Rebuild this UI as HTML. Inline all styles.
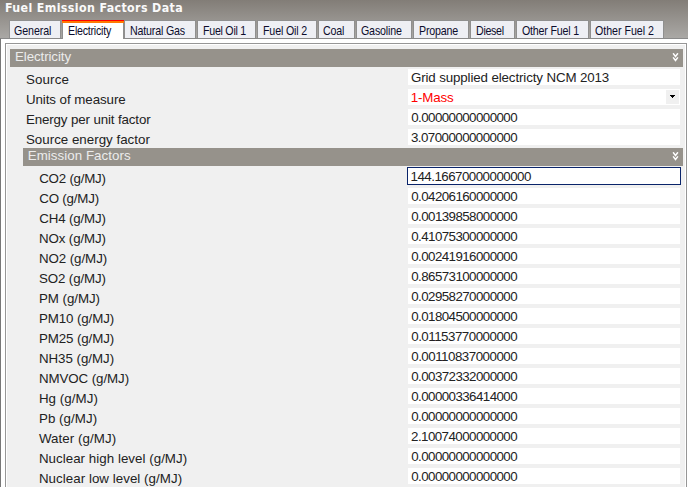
<!DOCTYPE html><html><head><meta charset="utf-8"><title>Fuel Emission Factors Data</title><style>
html,body{margin:0;padding:0}
body{width:688px;height:487px;overflow:hidden;position:relative;
 background:linear-gradient(to bottom,#827d77 0px,#aaa8a5 38px,#aaa8a5 100%);
 font-family:"Liberation Sans",Arial,sans-serif;font-size:13.33px;color:#222}
div,span{position:absolute;box-sizing:border-box;white-space:nowrap}
.title{top:0px;font-family:"DejaVu Sans Condensed","DejaVu Sans","Liberation Sans",sans-serif;font-weight:bold;font-size:12.3px;color:#fafafa;line-height:16px;font-stretch:condensed}
.tab{top:20px;height:18px;background:#eeeff4;border:1px solid #8f8f8f;border-bottom:none}
.tab.sel{height:19px;background:#fff;border-top:none;z-index:3}
.tab.sel i{position:absolute;left:-1px;right:-1px;display:block}
.tt{font-size:13px;line-height:14px;top:24px;transform:scaleX(0.82);transform-origin:0 0;color:#0c0c2c;z-index:5}
.panel{left:0px;top:38px;width:700px;height:460px;background:#fff;border-top:1px solid #8a8a8a;border-left:1px solid #777}
.inner{left:5px;top:43px;width:682px;height:460px;background:#f0f0f0;border:1px solid #969696;box-shadow:inset 0 0 0 1px #fff}
.hdr{background:#96928b;height:18px}
.ht{color:#ececec;line-height:16px;height:16px}
.lbl{line-height:16px;height:16px}
.val{left:408px;width:272px;height:16px;background:#fff}
.vt{line-height:16px;height:16px}
</style></head><body>
<span id="title" class="title" style="left:4.99px;top:0px;letter-spacing:0.378px;">Fuel Emission Factors Data</span>
<div class="panel"></div>
<div class="tab" style="left:9px;width:52px"></div>
<span id="t0" class="tt" style="left:14.11px;top:24px;letter-spacing:-0.105px;">General</span>
<div class="tab sel" style="left:62px;width:62px"><i style="top:0;height:1px;background:#f00"></i><i style="top:1px;height:2px;background:#ff7a00"></i></div>
<span id="t1" class="tt" style="left:67.81px;top:24px;letter-spacing:-0.284px;">Electricity</span>
<div class="tab" style="left:124px;width:72px"></div>
<span id="t2" class="tt" style="left:129.60px;top:24px;letter-spacing:-0.210px;">Natural Gas</span>
<div class="tab" style="left:197px;width:59px"></div>
<span id="t3" class="tt" style="left:202.52px;top:24px;letter-spacing:-0.323px;">Fuel Oil 1</span>
<div class="tab" style="left:257px;width:60px"></div>
<span id="t4" class="tt" style="left:262.52px;top:24px;letter-spacing:-0.191px;">Fuel Oil 2</span>
<div class="tab" style="left:318px;width:37px"></div>
<span id="t5" class="tt" style="left:322.62px;top:24px;letter-spacing:-0.216px;">Coal</span>
<div class="tab" style="left:356px;width:56px"></div>
<span id="t6" class="tt" style="left:360.99px;top:24px;letter-spacing:-0.207px;">Gasoline</span>
<div class="tab" style="left:413px;width:56px"></div>
<span id="t7" class="tt" style="left:418.52px;top:24px;letter-spacing:-0.211px;">Propane</span>
<div class="tab" style="left:470px;width:45px"></div>
<span id="t8" class="tt" style="left:476.02px;top:24px;letter-spacing:-0.374px;">Diesel</span>
<div class="tab" style="left:516px;width:73px"></div>
<span id="t9" class="tt" style="left:522.08px;top:24px;letter-spacing:-0.243px;">Other Fuel 1</span>
<div class="tab" style="left:590px;width:74px"></div>
<span id="t10" class="tt" style="left:595.45px;top:24px;letter-spacing:-0.029px;">Other Fuel 2</span>
<div class="inner"></div>
<div class="hdr" style="left:10px;top:49px;width:673px"></div>
<span id="h0" class="ht" style="left:14.97px;top:49px;letter-spacing:-0.090px;">Electricity</span>
<svg style="position:absolute;left:672px;top:53px" width="8" height="10" viewBox="0 0 8 10"><path d="M1.1 0.3 L3.5 3.4 L5.9 0.3 M1.1 4.4 L3.5 7.5 L5.9 4.4" stroke="#fff" stroke-width="1.5" fill="none"/></svg>
<span id="a0" class="lbl" style="left:25.94px;top:72px;letter-spacing:0.148px;">Source</span>
<div class="val" style="top:69px"></div>
<span id="av0" class="vt" style="left:410.91px;top:70px;letter-spacing:-0.122px;color:#222;">Grid supplied electricty NCM 2013</span>
<span id="a1" class="lbl" style="left:25.91px;top:92px;letter-spacing:-0.059px;">Units of measure</span>
<div class="val" style="top:89px"></div>
<span id="av1" class="vt" style="left:410.71px;top:90px;letter-spacing:-0.141px;color:#ff0000;">1-Mass</span>
<span id="a2" class="lbl" style="left:25.95px;top:112px;letter-spacing:-0.131px;">Energy per unit factor</span>
<div class="val" style="top:109px"></div>
<span id="av2" class="vt" style="left:411.24px;top:110px;letter-spacing:-0.569px;color:#222;">0.00000000000000</span>
<span id="a3" class="lbl" style="left:25.94px;top:132px;letter-spacing:0.010px;">Source energy factor</span>
<div class="val" style="top:129px"></div>
<span id="av3" class="vt" style="left:410.97px;top:130px;letter-spacing:-0.553px;color:#222;">3.07000000000000</span>
<div style="left:666px;top:90px;width:13px;height:14px;background:#f0f0f0"></div>
<svg style="position:absolute;left:670px;top:95px" width="5" height="3" viewBox="0 0 5 3" shape-rendering="crispEdges"><path d="M0 0H5V1H4V2H3V3H2V2H1V1H0Z" fill="#000"/></svg>
<div class="hdr" style="left:23px;top:148px;width:660px"></div>
<span id="h1" class="ht" style="left:27.73px;top:148px;letter-spacing:0.045px;">Emission Factors</span>
<svg style="position:absolute;left:672px;top:152px" width="8" height="10" viewBox="0 0 8 10"><path d="M1.1 0.3 L3.5 3.4 L5.9 0.3 M1.1 4.4 L3.5 7.5 L5.9 4.4" stroke="#fff" stroke-width="1.5" fill="none"/></svg>
<span id="b0" class="lbl" style="left:39.22px;top:171px;letter-spacing:-0.234px;">CO2 (g/MJ)</span>
<div class="val" style="top:167px;left:407px;width:274px;height:18px;border:1px solid #0a246a"></div>
<span id="bv0" class="vt" style="left:410.59px;top:169px;letter-spacing:-0.526px;">144.16670000000000</span>
<span id="b1" class="lbl" style="left:39.22px;top:191px;letter-spacing:-0.195px;">CO (g/MJ)</span>
<div class="val" style="top:188px"></div>
<span id="bv1" class="vt" style="left:411.24px;top:189px;letter-spacing:-0.569px;">0.04206160000000</span>
<span id="b2" class="lbl" style="left:39.22px;top:211px;letter-spacing:-0.148px;">CH4 (g/MJ)</span>
<div class="val" style="top:208px"></div>
<span id="bv2" class="vt" style="left:411.24px;top:209px;letter-spacing:-0.569px;">0.00139858000000</span>
<span id="b3" class="lbl" style="left:38.95px;top:231px;letter-spacing:-0.122px;">NOx (g/MJ)</span>
<div class="val" style="top:228px"></div>
<span id="bv3" class="vt" style="left:411.24px;top:229px;letter-spacing:-0.569px;">0.41075300000000</span>
<span id="b4" class="lbl" style="left:38.95px;top:251px;letter-spacing:-0.072px;">NO2 (g/MJ)</span>
<div class="val" style="top:248px"></div>
<span id="bv4" class="vt" style="left:411.24px;top:249px;letter-spacing:-0.569px;">0.00241916000000</span>
<span id="b5" class="lbl" style="left:38.94px;top:271px;letter-spacing:-0.120px;">SO2 (g/MJ)</span>
<div class="val" style="top:268px"></div>
<span id="bv5" class="vt" style="left:411.24px;top:269px;letter-spacing:-0.569px;">0.86573100000000</span>
<span id="b6" class="lbl" style="left:38.95px;top:291px;letter-spacing:-0.049px;">PM (g/MJ)</span>
<div class="val" style="top:288px"></div>
<span id="bv6" class="vt" style="left:411.24px;top:289px;letter-spacing:-0.569px;">0.02958270000000</span>
<span id="b7" class="lbl" style="left:38.95px;top:311px;letter-spacing:-0.106px;">PM10 (g/MJ)</span>
<div class="val" style="top:308px"></div>
<span id="bv7" class="vt" style="left:411.24px;top:309px;letter-spacing:-0.569px;">0.01804500000000</span>
<span id="b8" class="lbl" style="left:38.95px;top:331px;letter-spacing:-0.106px;">PM25 (g/MJ)</span>
<div class="val" style="top:328px"></div>
<span id="bv8" class="vt" style="left:411.24px;top:329px;letter-spacing:-0.501px;">0.01153770000000</span>
<span id="b9" class="lbl" style="left:38.95px;top:351px;letter-spacing:-0.034px;">NH35 (g/MJ)</span>
<div class="val" style="top:348px"></div>
<span id="bv9" class="vt" style="left:411.24px;top:349px;letter-spacing:-0.501px;">0.00110837000000</span>
<span id="b10" class="lbl" style="left:38.95px;top:371px;letter-spacing:-0.082px;">NMVOC (g/MJ)</span>
<div class="val" style="top:368px"></div>
<span id="bv10" class="vt" style="left:411.24px;top:369px;letter-spacing:-0.569px;">0.00372332000000</span>
<span id="b11" class="lbl" style="left:38.95px;top:391px;letter-spacing:0.061px;">Hg (g/MJ)</span>
<div class="val" style="top:388px"></div>
<span id="bv11" class="vt" style="left:411.24px;top:389px;letter-spacing:-0.569px;">0.00000336414000</span>
<span id="b12" class="lbl" style="left:38.95px;top:411px;letter-spacing:0.049px;">Pb (g/MJ)</span>
<div class="val" style="top:408px"></div>
<span id="bv12" class="vt" style="left:411.24px;top:409px;letter-spacing:-0.569px;">0.00000000000000</span>
<span id="b13" class="lbl" style="left:38.98px;top:431px;letter-spacing:0.054px;">Water (g/MJ)</span>
<div class="val" style="top:428px"></div>
<span id="bv13" class="vt" style="left:411.06px;top:429px;letter-spacing:-0.558px;">2.10074000000000</span>
<span id="b14" class="lbl" style="left:38.95px;top:451px;letter-spacing:0.033px;">Nuclear high level (g/MJ)</span>
<div class="val" style="top:448px"></div>
<span id="bv14" class="vt" style="left:411.24px;top:449px;letter-spacing:-0.569px;">0.00000000000000</span>
<span id="b15" class="lbl" style="left:38.95px;top:471px;letter-spacing:0.041px;">Nuclear low level (g/MJ)</span>
<div class="val" style="top:468px"></div>
<span id="bv15" class="vt" style="left:411.24px;top:469px;letter-spacing:-0.569px;">0.00000000000000</span>
</body></html>
